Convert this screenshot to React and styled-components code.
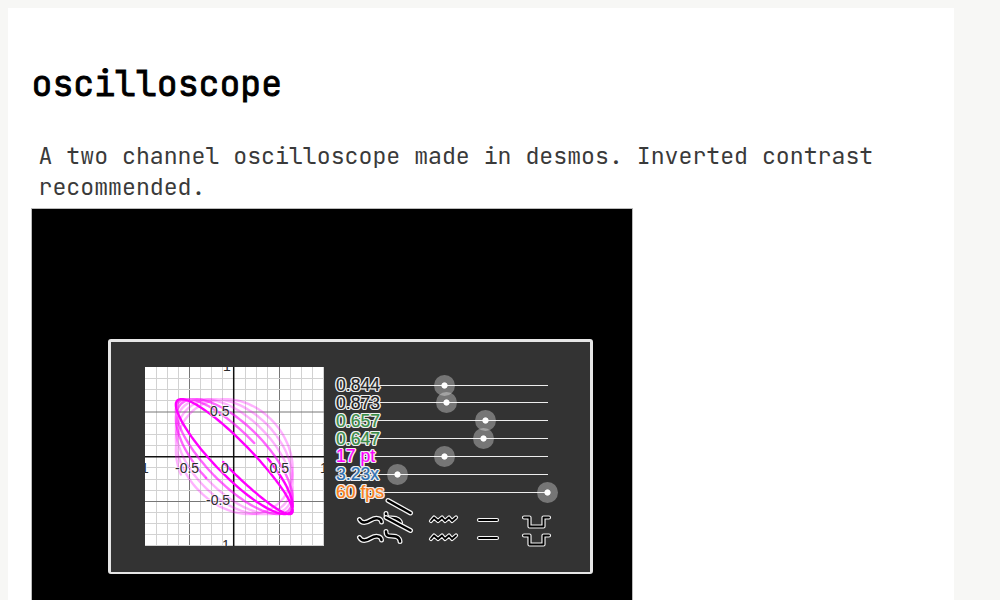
import React from "react";
import styled, { createGlobalStyle } from "styled-components";

const Global = createGlobalStyle`
  * { box-sizing: border-box; }
  html, body { margin: 0; height: 600px; overflow: hidden; background: #f7f7f5; }
`;

const Page = styled.div`
  height: 600px;
  padding: 8px 46px 0 8px;
  overflow: hidden;
`;

const Article = styled.article`
  height: 700px;
  padding: 52px 24px 0;
  background: #fff;
  font-family: "JetBrains Mono", "DejaVu Sans Mono", "Liberation Mono", monospace;
`;

const Title = styled.h1`
  margin: 0 0 0 -0.5px;
  height: 46px;
  color: #000;
  font-size: 34.8px;
  font-weight: 400;
  -webkit-text-stroke: 0.9px #000;
  line-height: 47px;
  white-space: nowrap;
`;

const Description = styled.p`
  margin: 34px 0 0;
  padding-left: 6.5px;
  color: #3a3a3a;
  font-size: 23.2px;
  line-height: 31px;
  height: 68px;
`;

const Screen = styled.section`
  width: 602px;
  height: 600px;
  margin-left: -1px;
  padding: 130px 38px 0 76px;
  border: 1px solid #bbb;
  background: #000;
`;

const Panel = styled.div`
  display: flex;
  gap: 12px;
  width: 485px;
  height: 235px;
  padding: 25px 0 0 34px;
  border: 2.5px solid #e6e6e6;
  border-width: 3px 3px 2px;
  border-radius: 3px;
  background: #333;
`;

const Plot = styled.svg`
  display: block;
  flex: none;
  width: 179px;
  height: 179px;
  background: #fff;
`;

const PlotText = styled.text`
  fill: #2c2c2c;
  stroke: rgba(255, 255, 255, 0.55);
  stroke-width: 2px;
  paint-order: stroke;
  font: 14px "Liberation Sans", Arial, sans-serif;
`;

const Controls = styled.div`
  width: 230px;
  padding-top: 9px;
`;

const SliderRow = styled.div`
  display: grid;
  grid-template-columns: 24px 188px;
  align-items: center;
  width: 212px;
  height: 17.85px;
`;

const Value = styled.span`
  position: relative;
  z-index: 1;
  color: ${(p) => p.$color};
  font: 17.6px/18px "Liberation Sans", Arial, sans-serif;
  white-space: nowrap;
  -webkit-text-stroke: 0.2px ${(p) => p.$color};
  text-shadow: 1.4px 0 #eee, -1.4px 0 #eee, 0 1.4px #eee, 0 -1.4px #eee,
    1px 1px #eee, -1px 1px #eee, 1px -1px #eee, -1px -1px #eee;
`;

const Track = styled.div`
  position: relative;
  height: 1px;
  background: #ededed;
`;

const Knob = styled.i`
  position: absolute;
  top: -10px;
  left: ${(p) => p.$at - 10.5}px;
  width: 21px;
  height: 21px;
  border-radius: 50%;
  background: radial-gradient(circle, #fff 2.7px, rgba(255, 255, 255, 0.33) 3.5px);
`;

const Waves = styled.svg`
  display: block;
  width: 230px;
  height: 56px;
  margin-top: -6px;
  overflow: visible;
`;

const STEP = 0.0322;
const START = -11;

function trace(from, to) {
  const points = [];
  for (let a = from; a <= to; a += 3) {
    const shift = 16.5 + (a - START) * STEP;
    const x = 89.3 + 58.4 * Math.sin((a * Math.PI) / 180);
    const y = 89.6 + 57.5 * Math.sin(((a + shift) * Math.PI) / 180);
    points.push(`${x.toFixed(1)} ${y.toFixed(1)}`);
  }
  return `M${points.join("L")}`;
}

const traces = [
  { from: 1575, to: 2095, opacity: 0.3 },
  { from: 1051, to: 1575, opacity: 0.3 },
  { from: 520, to: 1051, opacity: 0.6 },
  { from: -11, to: 505, opacity: 1 },
];

const columns = [11.5, 22.5, 33.5, 44.5, 55.5, 66.5, 77.5, 88.5, 100.5, 111.5, 122.5, 134.5, 145.5, 156.5, 167.5, 178.5];
const rows = [11.5, 22.5, 33.5, 45, 56.5, 67.5, 78.5, 89.5, 100.5, 112.5, 123.5, 134.5, 145.5, 156.5, 167.5, 178.5];
const lineColor = (i) => (i === 7 ? "#111" : i === 3 || i === 11 ? "#777" : "#d2d2d2");

const sliders = [
  { text: "0.844", color: "#222", at: 84 },
  { text: "0.873", color: "#222", at: 86 },
  { text: "0.657", color: "#388c46", at: 125.5 },
  { text: "0.647", color: "#388c46", at: 123.5 },
  { text: "17 pt", color: "#f0f", at: 84 },
  { text: "3.23x", color: "#2d70b3", at: 37 },
  { text: "60 fps", color: "#fa7e19", at: 187 },
];

const glyphs = [
  "M359.500 519.500C362 524 366 523 371 520C375 517.500 381 517.500 381.500 522",
  "M359.500 537.500C362 542 366 541 371 538C375 535.500 381 535.500 381.500 540",
  "M386 513.500C386 520 391 517 396 518.500Q400 520 400.500 522.500",
  "M386 531.500C386 538 391 535 396 536.500Q400 538 400 541.500",
  "M388 500.500L410.500 513",
  "M386 517.500L410.500 530.500",
];

const thinGlyphs = [
  "M431 521L434 517.500L438 521L442 517.500L445 521L449 517.500L452 521L456 517.500",
  "M431 539L434 535.500L438 539L442 535.500L445 539L449 535.500L452 539L456 535.500",
  "M479 520H497",
  "M479 538H497",
  "M524 517.500H529.500V526.500H543.500V517.500H549",
  "M524 535.500H529.500V544.500H543.500V535.500H549",
];

function Scope() {
  return (
    <Plot viewBox="0 0 179 179">
      {columns.map((x, i) => i !== 7 && <path key={x} d={`M${x} 0V179`} stroke={lineColor(i)} />)}
      {rows.map((y, i) => i !== 7 && <path key={y} d={`M0 ${y}H179`} stroke={lineColor(i)} />)}
      <path d="M88.700 0V179M0 89.700H179" stroke="#111" strokeWidth="1.5" />
      {traces.map((t) => (
        <path key={t.from} d={trace(t.from, t.to)} fill="none" stroke="#f0f" strokeWidth="2.4" strokeLinecap="round" opacity={t.opacity} />
      ))}
      <PlotText x="65" y="49">0.5</PlotText>
      <PlotText x="30" y="106">-0.5</PlotText>
      <PlotText x="76" y="106">0</PlotText>
      <PlotText x="124.500" y="106">0.5</PlotText>
      <PlotText x="61" y="138">-0.5</PlotText>
      <PlotText x="78" y="4">1</PlotText>
      <PlotText x="77" y="183">1</PlotText>
      <PlotText x="-4" y="106">1</PlotText>
      <PlotText x="175" y="106">1</PlotText>
    </Plot>
  );
}

export default function App() {
  return (
    <>
      <Global />
      <Page>
        <Article>
          <Title>oscilloscope</Title>
          <Description>
            A two channel oscilloscope made in desmos. Inverted contrast recommended.
          </Description>
          <Screen>
            <Panel>
              <Scope />
              <Controls>
                {sliders.map((s) => (
                  <SliderRow key={s.text}>
                    <Value $color={s.color}>{s.text}</Value>
                    <Track>
                      <Knob $at={s.at} />
                    </Track>
                  </SliderRow>
                ))}
                <Waves viewBox="336 495 230 56" fill="none" strokeLinecap="round" strokeLinejoin="round">
                  {glyphs.map((d) => (
                    <g key={d}>
                      <path d={d} stroke="#f4f4f4" strokeWidth="5" />
                      <path d={d} stroke="#000" strokeWidth="2.500" />
                    </g>
                  ))}
                  {thinGlyphs.map((d) => (
                    <g key={d}>
                      <path d={d} stroke="#f4f4f4" strokeWidth="4.200" />
                      <path d={d} stroke="#000" strokeWidth="1.900" />
                    </g>
                  ))}
                </Waves>
              </Controls>
            </Panel>
          </Screen>
        </Article>
      </Page>
    </>
  );
}
